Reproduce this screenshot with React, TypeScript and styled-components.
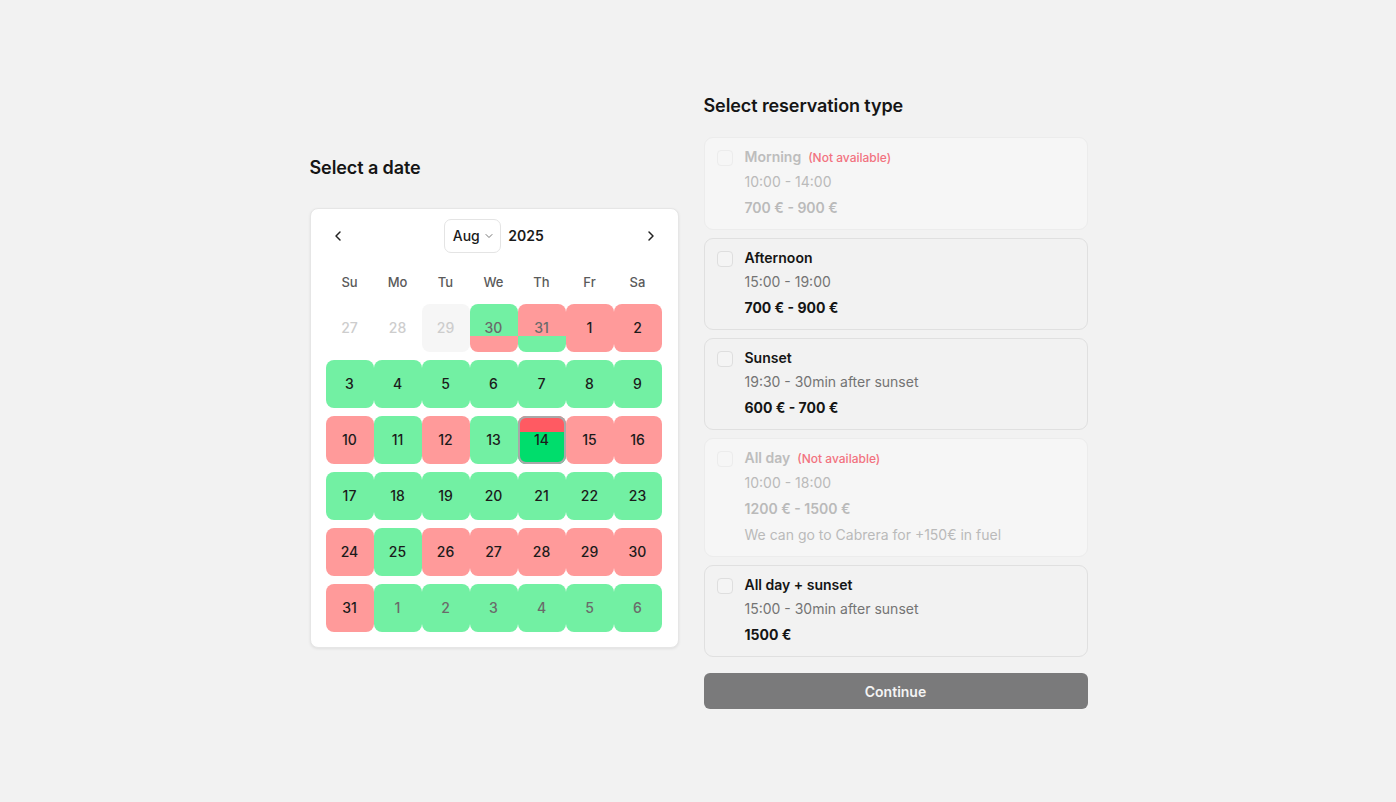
import React from "react";
import styled, { createGlobalStyle, css } from "styled-components";
import { ChevronLeft, ChevronRight, ChevronDown } from "lucide-react";

const Global = createGlobalStyle`
  * { box-sizing: border-box; }
  html, body { margin: 0; padding: 0; background: #f2f2f2; }
  body { font-family: Inter, "Noto Sans", "Liberation Sans", sans-serif; color: #141414; }
`;

const Page = styled.div`
  width: 1396px;
  height: 802px;
  display: flex;
  justify-content: center;
  align-items: center;
  gap: 25px;
  padding-left: 1px;
  padding-top: 2px;
`;

const Column = styled.div<{ $w: number }>`
  width: ${(p) => p.$w}px;
  display: flex;
  flex-direction: column;
`;

const Heading = styled.h2<{ $mb: number }>`
  margin: 0 0 ${(p) => p.$mb}px 0;
  font-size: 18px;
  line-height: 22px;
  font-weight: 600;
  color: #151515;
  letter-spacing: -0.1px;
`;

const CalendarCard = styled.div`
  background: #ffffff;
  border-radius: 8px;
  border: 1px solid #e6e6e6;
  box-shadow: 0 1px 3px rgba(0, 0, 0, 0.08);
  padding: 11px 15px 15px;
`;

const Header = styled.div`
  height: 32px;
  display: flex;
  align-items: center;
  justify-content: space-between;
`;

const NavButton = styled.button`
  width: 24px;
  height: 24px;
  border: none;
  background: transparent;
  display: flex;
  align-items: center;
  justify-content: center;
  padding: 0;
  color: #222;
`;

const MonthGroup = styled.div`
  display: flex;
  align-items: center;
  gap: 7px;
`;

const MonthSelect = styled.div`
  height: 34px;
  width: 57px;
  border: 1px solid #e4e4e4;
  border-radius: 7px;
  display: flex;
  align-items: center;
  justify-content: center;
  gap: 3px;
  font-size: 14px;
  font-weight: 500;
  color: #1a1a1a;
  padding-left: 2px;
  svg { color: #777; }
`;

const Year = styled.span`
  font-size: 14px;
  font-weight: 600;
  color: #1a1a1a;
`;

const WeekRow = styled.div`
  margin-top: 16px;
  display: grid;
  grid-template-columns: repeat(7, 48px);
  height: 28px;
  align-items: center;
  margin-bottom: 8px;
`;

const WeekDay = styled.span`
  text-align: center;
  font-size: 13px;
  font-weight: 500;
  color: #5a5a5a;
`;

const DaysGrid = styled.div`
  display: grid;
  grid-template-columns: repeat(7, 48px);
  grid-auto-rows: 48px;
  row-gap: 8px;
`;

type Status = "none" | "muted" | "green" | "red" | "greenRed" | "redGreen" | "selected";

const GREEN = "#72f0a3";
const RED = "#ff9a9a";

const bgFor = (s: Status) => {
  switch (s) {
    case "muted":
      return "#f6f6f6";
    case "green":
      return GREEN;
    case "red":
      return RED;
    case "greenRed":
      return `linear-gradient(to bottom, ${GREEN} 0 32px, ${RED} 32px 48px)`;
    case "redGreen":
      return `linear-gradient(to bottom, ${RED} 0 32px, ${GREEN} 32px 48px)`;
    case "selected":
      return `linear-gradient(to bottom, #ff5a62 0 16px, #00dd6c 16px 48px)`;
    default:
      return "transparent";
  }
};

const Day = styled.div<{ $status: Status; $tone: "dark" | "outside" | "disabled" }>`
  border-radius: 8px;
  background: ${(p) => bgFor(p.$status)};
  display: flex;
  align-items: center;
  justify-content: center;
  font-size: 14px;
  font-weight: 500;
  color: ${(p) => (p.$tone === "dark" ? "#1b1b1b" : p.$tone === "outside" ? "#6a6a6a" : "#cdcdcd")};
  ${(p) =>
    p.$status === "selected" &&
    css`
      box-shadow: inset 0 0 0 2px #a8a8a8;
    `}
`;

const Options = styled.div`
  display: flex;
  flex-direction: column;
  gap: 8px;
`;

const Option = styled.div<{ $disabled?: boolean }>`
  border: 1px solid ${(p) => (p.$disabled ? "#ececec" : "#e0e0e0")};
  border-radius: 9px;
  background: ${(p) => (p.$disabled ? "#f6f6f6" : "#f2f2f2")};
  padding: 9px 16px 11px 12px;
  display: flex;
  gap: 12px;
`;

const Check = styled.span<{ $disabled?: boolean }>`
  width: 16px;
  height: 16px;
  margin-top: 3px;
  flex-shrink: 0;
  border-radius: 4px;
  border: 1px solid ${(p) => (p.$disabled ? "#ececec" : "#dedede")};
  background: ${(p) => (p.$disabled ? "#f6f6f6" : "#f4f4f4")};
`;

const OptionBody = styled.div`
  display: flex;
  flex-direction: column;
`;

const TitleRow = styled.div`
  display: flex;
  align-items: baseline;
  gap: 7px;
  line-height: 20px;
`;

const Title = styled.span<{ $disabled?: boolean }>`
  font-size: 14px;
  font-weight: 600;
  color: ${(p) => (p.$disabled ? "#bdbdbd" : "#151515")};
`;

const NotAvailable = styled.span`
  font-size: 12px;
  font-weight: 500;
  color: #f2727f;
`;

const Line = styled.div<{ $kind: "time" | "price" | "note"; $disabled?: boolean }>`
  font-size: 14px;
  line-height: 20px;
  margin-top: ${(p) => (p.$kind === "time" ? 4 : 6)}px;
  font-weight: ${(p) => (p.$kind === "price" ? (p.$disabled ? 600 : 700) : 400)};
  color: ${(p) =>
    p.$disabled ? "#bababa" : p.$kind === "price" ? "#151515" : "#747474"};
`;

const ContinueButton = styled.button`
  margin-top: 16px;
  height: 36px;
  border: none;
  border-radius: 6px;
  background: #7a7a7b;
  color: #f4f4f4;
  font-family: inherit;
  font-size: 14px;
  font-weight: 600;
  width: 100%;
`;

type Cell = { n: number; s: Status; tone: "dark" | "outside" | "disabled" };

const g = (n: number): Cell => ({ n, s: "green", tone: "dark" });
const r = (n: number): Cell => ({ n, s: "red", tone: "dark" });

const cells: Cell[] = [
  { n: 27, s: "none", tone: "disabled" },
  { n: 28, s: "none", tone: "disabled" },
  { n: 29, s: "muted", tone: "disabled" },
  { n: 30, s: "greenRed", tone: "outside" },
  { n: 31, s: "redGreen", tone: "outside" },
  r(1), r(2),
  g(3), g(4), g(5), g(6), g(7), g(8), g(9),
  r(10), g(11), r(12), g(13), { n: 14, s: "selected", tone: "dark" }, r(15), r(16),
  g(17), g(18), g(19), g(20), g(21), g(22), g(23),
  r(24), g(25), r(26), r(27), r(28), r(29), r(30),
  r(31),
  ...[1, 2, 3, 4, 5, 6].map((n) => ({ n, s: "green" as Status, tone: "outside" as const })),
];

type Opt = { title: string; time: string; price: string; note?: string; disabled?: boolean };

const options: Opt[] = [
  { title: "Morning", time: "10:00 - 14:00", price: "700 € - 900 €", disabled: true },
  { title: "Afternoon", time: "15:00 - 19:00", price: "700 € - 900 €" },
  { title: "Sunset", time: "19:30 - 30min after sunset", price: "600 € - 700 €" },
  {
    title: "All day",
    time: "10:00 - 18:00",
    price: "1200 € - 1500 €",
    note: "We can go to Cabrera for +150€ in fuel",
    disabled: true,
  },
  { title: "All day + sunset", time: "15:00 - 30min after sunset", price: "1500 €" },
];

export default function App() {
  return (
    <>
      <Global />
      <Page>
        <Column $w={369}>
          <Heading $mb={29}>Select a date</Heading>
          <CalendarCard>
            <Header>
              <NavButton aria-label="Previous month">
                <ChevronLeft size={16} strokeWidth={2.2} />
              </NavButton>
              <MonthGroup>
                <MonthSelect>
                  Aug <ChevronDown size={12} strokeWidth={2} />
                </MonthSelect>
                <Year>2025</Year>
              </MonthGroup>
              <NavButton aria-label="Next month">
                <ChevronRight size={16} strokeWidth={2.2} />
              </NavButton>
            </Header>
            <WeekRow>
              {["Su", "Mo", "Tu", "We", "Th", "Fr", "Sa"].map((d) => (
                <WeekDay key={d}>{d}</WeekDay>
              ))}
            </WeekRow>
            <DaysGrid>
              {cells.map((c, i) => (
                <Day key={i} $status={c.s} $tone={c.tone}>
                  {c.n}
                </Day>
              ))}
            </DaysGrid>
          </CalendarCard>
        </Column>
        <Column $w={384}>
          <Heading $mb={20}>Select reservation type</Heading>
          <Options>
            {options.map((o) => (
              <Option key={o.title} $disabled={o.disabled}>
                <Check $disabled={o.disabled} />
                <OptionBody>
                  <TitleRow>
                    <Title $disabled={o.disabled}>{o.title}</Title>
                    {o.disabled && <NotAvailable>(Not available)</NotAvailable>}
                  </TitleRow>
                  <Line $kind="time" $disabled={o.disabled}>{o.time}</Line>
                  <Line $kind="price" $disabled={o.disabled}>{o.price}</Line>
                  {o.note && (
                    <Line $kind="note" $disabled={o.disabled}>{o.note}</Line>
                  )}
                </OptionBody>
              </Option>
            ))}
          </Options>
          <ContinueButton>Continue</ContinueButton>
        </Column>
      </Page>
    </>
  );
}
